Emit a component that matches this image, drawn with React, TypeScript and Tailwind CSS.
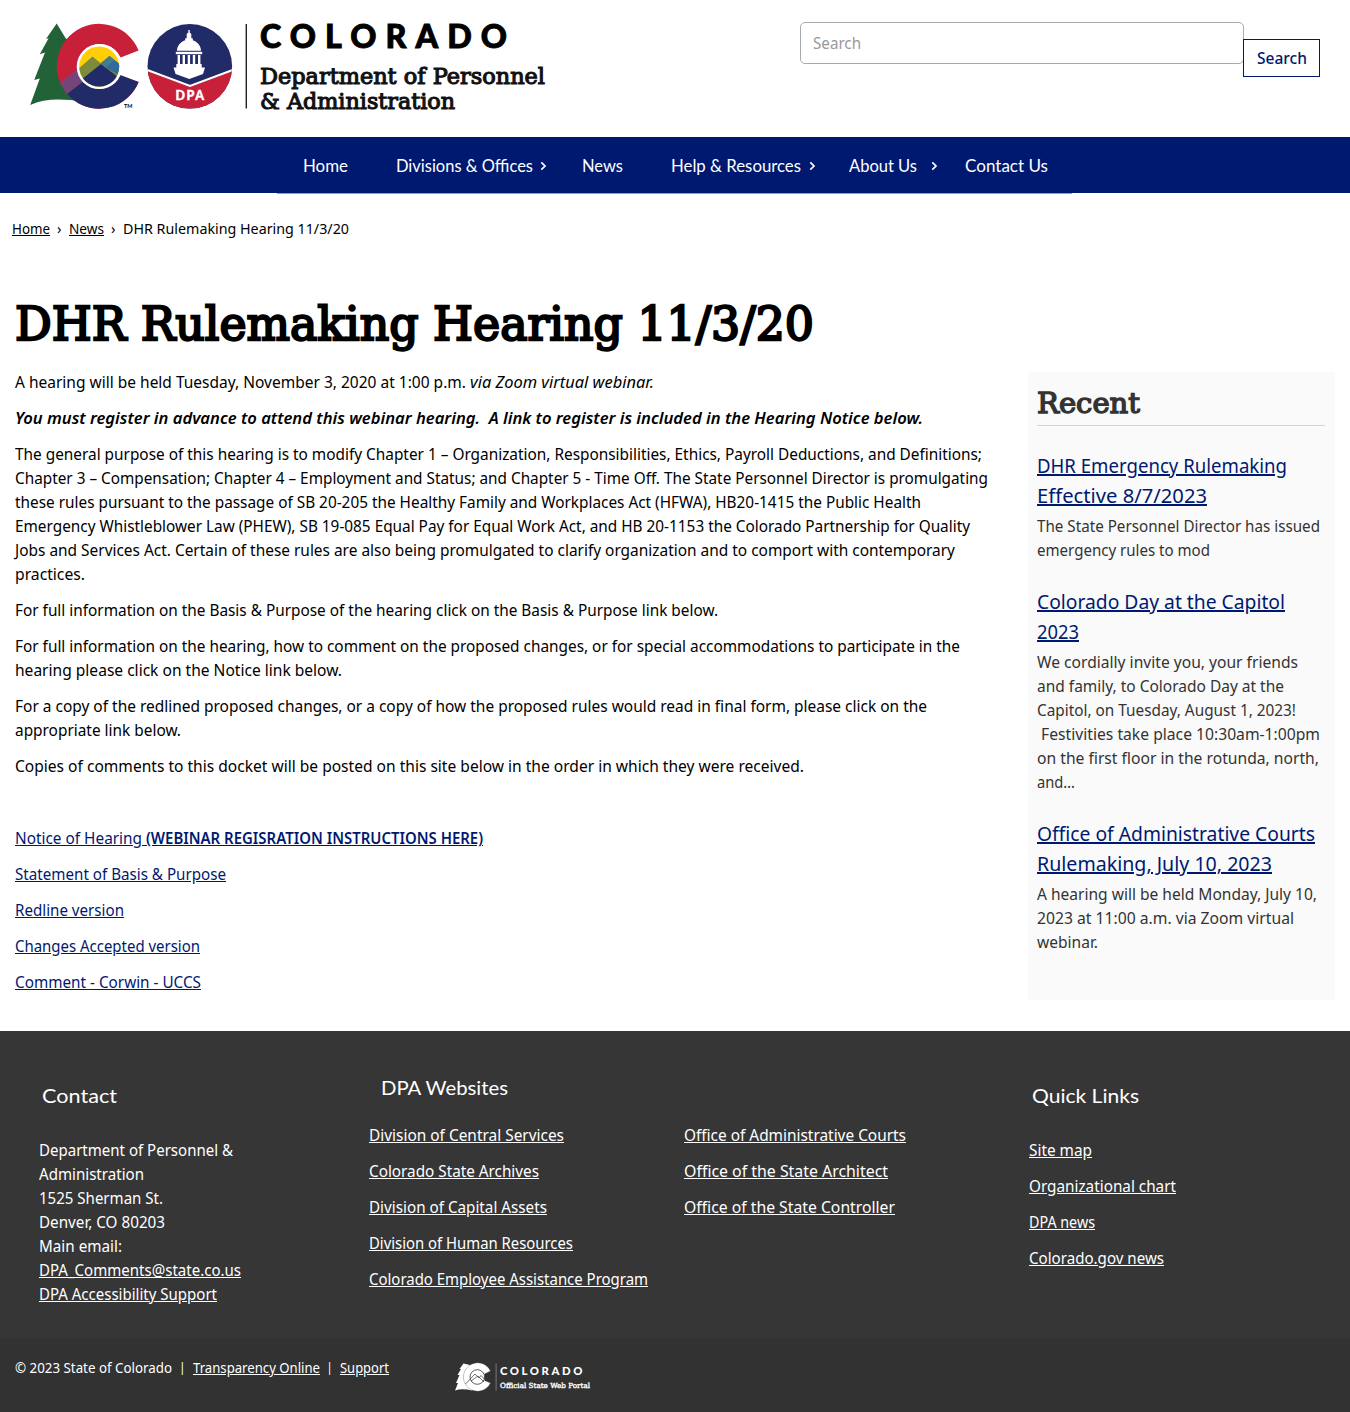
import { useLayoutEffect, useRef } from "react";
import type { ReactNode } from "react";

const BODY = "font-['Noto_Sans',sans-serif]";
const SLAB = "font-['DejaVu_Serif',serif] font-normal [-webkit-text-stroke:0.05em_currentColor]";
const MUSEO = "font-['Lato',sans-serif]";

/** One run of text, condensed or widened horizontally to a set measure. */
function Fit({ w, className = "", children }: { w: number; className?: string; children: ReactNode }) {
  const inner = useRef<HTMLSpanElement>(null);
  useLayoutEffect(() => {
    if (!inner.current) return;
    inner.current.style.transform = "none";
    const natural = inner.current.getBoundingClientRect().width;
    inner.current.style.transform = `scaleX(${w / natural})`;
    inner.current.style.marginRight = `${w - natural}px`;
  }, [w]);
  return (
    <span className="inline-block whitespace-pre">
      <span ref={inner} className={"inline-block w-max origin-left whitespace-pre " + className}>
        {children}
      </span>
    </span>
  );
}

function Para({ lines }: { lines: [number, string][] }) {
  return (
    <p className="mb-3">
      {lines.map(([w, t]) => (
        <span key={t} className="block h-6">
          <Fit w={w}>{t}</Fit>
        </span>
      ))}
    </p>
  );
}

function LinkLine({ w, children }: { w: number; children: ReactNode }) {
  return (
    <a href="#" className="block h-6">
      <Fit w={w} className="underline">{children}</Fit>
    </a>
  );
}

function Emblems() {
  return (
    <svg className="h-[88px] w-[218px] shrink-0" viewBox="30 23 218 88" aria-hidden="true">
      <defs>
        <clipPath id="cshape">
          <path d="M138.6 50.6 A42.4 42.4 0 1 0 138.6 81.9 L120.6 75.2 A22.4 22.4 0 1 1 120.6 57.6 Z" />
        </clipPath>
        <clipPath id="disc"><circle cx="99.2" cy="66.6" r="20" /></clipPath>
        <clipPath id="seal"><circle cx="189.8" cy="66.3" r="42.3" /></clipPath>
      </defs>
      <path fill="#226237" d="M56.7 23.5 L46 39 L48.6 38.2 L39.8 54.2 L45 52.6 L34.2 80 L39.8 78.6 L30.2 105 C44 99 60 98 84 102 L76 60 L70 42 L65.5 38 Z" />
      <g clipPath="url(#cshape)">
        <rect x="56" y="22" width="88" height="90" fill="#c92039" />
        <path d="M56 86 L92 58 V85 L67 95 Z" fill="#75457a" />
        <path d="M66 95 L90 76 L110 86 L120 74 L142 80 V112 H66 Z" fill="#202b68" />
      </g>
      <circle cx="99.2" cy="66.6" r="22.5" fill="#fff" />
      <g clipPath="url(#disc)">
        <rect x="78" y="45" width="43" height="43" fill="#ffce07" />
        <path d="M76 71 L92.5 56.5 L100.5 63 L109.5 56 L123 67 V90 H76 Z" fill="#7e8b3a" />
        <path d="M101 64 L109.5 56 L123 67 V78 Z" fill="#33699b" />
        <path d="M76 84 L101 64 L122 80 V90 H76 Z" fill="#202b68" />
        <path d="M101 64 L106 68 L114 60 L109.5 56 Z" fill="#3f7d93" />
      </g>
      <text x="124" y="107.5" fontSize="5.5" fontWeight="700" fontFamily="Lato, sans-serif">TM</text>
      <g clipPath="url(#seal)">
        <rect x="147" y="23" width="86" height="87" fill="#202b68" />
        <path d="M147 70 L190 86.5 L233 70 V110 H147 Z" fill="#c92039" />
        <path d="M146 69.5 L190 86 L234 69.5" fill="none" stroke="#fff" strokeWidth="2" />
      </g>
      <g fill="#fff">
        <path d="M188.3 30 h1.4 v2.5 l1.6 1.5 v4.3 h1.5 v2 C198 42 201 46.5 201 50.8 H177 C177 46.5 180 42 185.2 40.3 v-2 h1.5 v-4.3 l1.6 -1.5 Z" />
        <rect x="175.8" y="51.8" width="26.4" height="2.4" />
        <path d="M177.6 55 h2.4 v9 h-2.4z M182.6 55 h2.4 v9 h-2.4z M187.7 55 h2.4 v9 h-2.4z M192.8 55 h2.4 v9 h-2.4z M198 55 h2.4 v9 h-2.4z" />
        <path d="M176.3 64 H201.7 V67.5 H205 L203 74 L189.3 79 L175.6 74 L173.5 67.5 H176.3 Z" />
      </g>
      <text x="175.5" y="100" fontSize="12.5" fontWeight="900" fill="#fff" stroke="#fff" strokeWidth=".4" textLength="28.5" fontFamily="Lato, sans-serif">DPA</text>
      <rect x="245.6" y="24" width="1.4" height="84.5" fill="#222" />
    </svg>
  );
}

function Chevron({ className }: { className: string }) {
  return (
    <svg className={"h-[10px] w-[7px] shrink-0 " + className} viewBox="0 0 7 10" fill="none" stroke="#fff" strokeWidth="1.7">
      <path d="M1.3 1.3 L5 5 L1.3 8.7" />
    </svg>
  );
}

function PortalMark() {
  return (
    <svg className="h-[30px] w-[43px] shrink-0" viewBox="454 1362 43 30" aria-hidden="true">
      <path fill="#fff" d="M463.5 1363.5 L459.5 1369 L461 1369 L457.5 1375 L459.5 1375 L456 1383 L458 1383 L455 1390.5 Q462 1388 472 1390.5 L470 1365 Z" />
      <path fill="#fff" stroke="#333" strokeWidth=".3" d="M490.5 1371 A14.2 14.2 0 1 0 490.5 1383 L484.5 1380.5 V1374 Z" />
      <circle cx="477.3" cy="1377" r="7.3" fill="#fff" stroke="#333" strokeWidth=".8" />
      <path d="M465.5 1384 L475 1374 L479 1378 L481 1375.5 L484.5 1379 M471 1381 L478 1376 L484 1382" fill="none" stroke="#333" strokeWidth=".7" />
      <rect x="495.6" y="1363.5" width="1" height="27" fill="#777" />
    </svg>
  );
}

export default function App() {
  return (
    <div className={"h-[1412px] w-[1350px] overflow-hidden bg-white text-[16px] leading-6 text-black " + BODY}>
      <header className="flex h-[137px] justify-between pl-[30px] pr-[30px]">
        <div className="flex pt-[23px]">
          <Emblems />
          <div className="ml-3">
            <div className="-mt-[7px] h-[48px] leading-[40px]">
              <Fit w={256} className={"text-[32px] font-black tracking-[9px] [-webkit-text-stroke:0.9px_currentColor] " + MUSEO}>COLORADO</Fit>
            </div>
            <div className={"h-[25px] text-[22px] leading-[25px] text-[#111] " + SLAB}>
              <Fit w={285}>Department of Personnel</Fit>
            </div>
            <div className={"h-[25px] text-[22px] leading-[25px] text-[#111] " + SLAB}>
              <Fit w={195}>&amp; Administration</Fit>
            </div>
          </div>
        </div>
        <form className="flex pt-[22px]">
          <div className="flex h-[42px] w-[444px] items-center rounded-[5px] border border-[#aaa] pl-3 text-[#999]">
            <Fit w={48}>Search</Fit>
          </div>
          <button type="button" className="-ml-px mt-[17px] flex h-[38px] w-[77px] items-center justify-center border border-[#001970] text-[#001970]">
            <Fit w={50} className="font-medium">Search</Fit>
          </button>
        </form>
      </header>

      <nav className={"flex h-14 items-center bg-[#001970] pl-[303px] pt-px text-[17px] text-white " + MUSEO}>
        <Fit w={45}>Home</Fit>
        <span className="ml-12 flex items-center"><Fit w={137}>Divisions &amp; Offices</Fit><Chevron className="ml-[7px]" /></span>
        <span className="ml-[35px] flex"><Fit w={41}>News</Fit></span>
        <span className="ml-12 flex items-center"><Fit w={130}>Help &amp; Resources</Fit><Chevron className="ml-2" /></span>
        <span className="ml-[33px] flex items-center"><Fit w={68}>About Us</Fit><Chevron className="ml-[14px]" /></span>
        <span className="ml-[27px] flex"><Fit w={83}>Contact Us</Fit></span>
      </nav>
      <div className="ml-[277px] h-px w-[795px] bg-[#8f9bc6]" />

      <div className="flex h-[70px] items-start pl-3 pt-[22px] text-[14.5px]">
        <a href="#"><Fit w={38} className="underline">Home</Fit></a>
        <span className="ml-[7px] w-3">›</span>
        <a href="#"><Fit w={35} className="underline">News</Fit></a>
        <span className="ml-[7px] w-3">›</span>
        <Fit w={226}>DHR Rulemaking Hearing 11/3/20</Fit>
      </div>

      <main className="h-[767px] pl-[15px]">
        <h1 className={"h-[106px] pt-[30px] text-[46px] leading-[60px] " + SLAB}>
          <Fit w={799}>DHR Rulemaking Hearing 11/3/20</Fit>
        </h1>
        <div className="flex">
          <article className="w-[1013px]">
            <p className="mb-3 h-6">
              <Fit w={455}>{"A hearing will be held Tuesday, November 3, 2020 at 1:00 p.m. "}</Fit>
              <Fit w={184} className="italic">via Zoom virtual webinar.</Fit>
            </p>
            <p className="mb-3 h-6">
              <Fit w={908} className="font-semibold italic">{"You must register in advance to attend this webinar hearing.  A link to register is included in the Hearing Notice below."}</Fit>
            </p>
            <Para lines={[
              [967, "The general purpose of this hearing is to modify Chapter 1 – Organization, Responsibilities, Ethics, Payroll Deductions, and Definitions;"],
              [973, "Chapter 3 – Compensation; Chapter 4 – Employment and Status; and Chapter 5 - Time Off. The State Personnel Director is promulgating"],
              [906, "these rules pursuant to the passage of SB 20-205 the Healthy Family and Workplaces Act (HFWA), HB20-1415 the Public Health"],
              [955, "Emergency Whistleblower Law (PHEW), SB 19-085 Equal Pay for Equal Work Act, and HB 20-1153 the Colorado Partnership for Quality"],
              [940, "Jobs and Services Act. Certain of these rules are also being promulgated to clarify organization and to comport with contemporary"],
              [70, "practices."],
            ]} />
            <Para lines={[[703, "For full information on the Basis & Purpose of the hearing click on the Basis & Purpose link below."]]} />
            <Para lines={[
              [945, "For full information on the hearing, how to comment on the proposed changes, or for special accommodations to participate in the"],
              [327, "hearing please click on the Notice link below."],
            ]} />
            <Para lines={[
              [912, "For a copy of the redlined proposed changes, or a copy of how the proposed rules would read in final form, please click on the"],
              [166, "appropriate link below."],
            ]} />
            <Para lines={[[789, "Copies of comments to this docket will be posted on this site below in the order in which they were received."]]} />
            <div className="mt-12 space-y-3 text-[#001970]">
              <a href="#" className="block h-6">
                <Fit w={131} className="underline">{"Notice of Hearing "}</Fit>
                <Fit w={337} className="font-semibold underline">(WEBINAR REGISRATION INSTRUCTIONS HERE)</Fit>
              </a>
              <LinkLine w={211}>Statement of Basis &amp; Purpose</LinkLine>
              <LinkLine w={109}>Redline version</LinkLine>
              <LinkLine w={185}>Changes Accepted version</LinkLine>
              <LinkLine w={186}>Comment - Corwin - UCCS</LinkLine>
            </div>
          </article>

          <aside className="mt-[2px] h-[628px] w-[307px] bg-[#fafafa] pl-[9px] pr-[10px] text-[#333]">
            <h2 className={"h-[54px] border-b border-[#d4d4d4] pt-[12px] text-[28px] leading-10 " + SLAB}>
              <Fit w={103}>Recent</Fit>
            </h2>
            <div className="mt-[25px] text-[20px] leading-[30px] text-[#001970]">
              <a href="#" className="block h-[30px]"><Fit w={250} className="underline">DHR Emergency Rulemaking</Fit></a>
              <a href="#" className="block h-[30px]"><Fit w={170} className="underline">Effective 8/7/2023</Fit></a>
            </div>
            <div className="mt-[3px]">
              <Para lines={[[283, "The State Personnel Director has issued"], [173, "emergency rules to mod"]]} />
            </div>
            <div className="mt-[25px] text-[20px] leading-[30px] text-[#001970]">
              <a href="#" className="block h-[30px]"><Fit w={248} className="underline">Colorado Day at the Capitol</Fit></a>
              <a href="#" className="block h-[30px]"><Fit w={42} className="underline">2023</Fit></a>
            </div>
            <div className="mt-[3px]">
              <Para lines={[
                [261, "We cordially invite you, your friends"],
                [247, "and family, to Colorado Day at the"],
                [259, "Capitol, on Tuesday, August 1, 2023!"],
                [283, " Festivities take place 10:30am-1:00pm"],
                [282, "on the first floor in the rotunda, north,"],
                [38, "and…"],
              ]} />
            </div>
            <div className="mt-[25px] text-[20px] leading-[30px] text-[#001970]">
              <a href="#" className="block h-[30px]"><Fit w={278} className="underline">Office of Administrative Courts</Fit></a>
              <a href="#" className="block h-[30px]"><Fit w={235} className="underline">Rulemaking, July 10, 2023</Fit></a>
            </div>
            <div className="mt-[3px]">
              <Para lines={[[280, "A hearing will be held Monday, July 10,"], [257, "2023 at 11:00 a.m. via Zoom virtual"], [61, "webinar."]]} />
            </div>
          </aside>
        </div>
      </main>

      <footer className="text-white">
        <div className="flex h-[307px] bg-[#363636]">
          <section className="w-[369px] pl-[39px] pt-[52px]">
            <h3 className={"h-[55px] pl-[3px] text-[20px] " + MUSEO}><Fit w={75}>Contact</Fit></h3>
            <div className="h-6"><Fit w={194}>Department of Personnel &amp;</Fit></div>
            <div className="h-6"><Fit w={105}>Administration</Fit></div>
            <div className="h-6"><Fit w={124}>1525 Sherman St.</Fit></div>
            <div className="h-6"><Fit w={126}>Denver, CO 80203</Fit></div>
            <div className="h-6"><Fit w={83}>Main email:</Fit></div>
            <LinkLine w={202}>DPA_Comments@state.co.us</LinkLine>
            <LinkLine w={178}>DPA Accessibility Support</LinkLine>
          </section>
          <section className="w-[660px] pt-[44px]">
            <h3 className={"h-[48px] pl-3 text-[20px] " + MUSEO}><Fit w={127}>DPA Websites</Fit></h3>
            <div className="flex">
              <div className="w-[315px] space-y-3">
                <LinkLine w={195}>Division of Central Services</LinkLine>
                <LinkLine w={170}>Colorado State Archives</LinkLine>
                <LinkLine w={178}>Division of Capital Assets</LinkLine>
                <LinkLine w={204}>Division of Human Resources</LinkLine>
                <LinkLine w={279}>Colorado Employee Assistance Program</LinkLine>
              </div>
              <div className="space-y-3">
                <LinkLine w={222}>Office of Administrative Courts</LinkLine>
                <LinkLine w={204}>Office of the State Architect</LinkLine>
                <LinkLine w={211}>Office of the State Controller</LinkLine>
              </div>
            </div>
          </section>
          <section className="pt-[52px]">
            <h3 className={"h-[55px] pl-[3px] text-[20px] " + MUSEO}><Fit w={107}>Quick Links</Fit></h3>
            <div className="space-y-3">
              <LinkLine w={63}>Site map</LinkLine>
              <LinkLine w={147}>Organizational chart</LinkLine>
              <LinkLine w={66}>DPA news</LinkLine>
              <LinkLine w={135}>Colorado.gov news</LinkLine>
            </div>
          </section>
        </div>
        <div className="flex h-[74px] bg-[#323232] pl-[15px] text-[14px]">
          <div className="flex w-[439px] pt-[18px]">
            <Fit w={157}>© 2023 State of Colorado</Fit>
            <span className="w-[20.5px] text-center text-[12px]">|</span>
            <a href="#"><Fit w={127} className="underline">Transparency Online</Fit></a>
            <span className="w-5 text-center text-[12px]">|</span>
            <a href="#"><Fit w={49} className="underline">Support</Fit></a>
          </div>
          <div className="flex pt-6">
            <PortalMark />
            <div className="ml-[3px] pt-px">
              <div className="h-[14px] leading-[14px]">
                <Fit w={85} className={"text-[11px] font-black tracking-[2.5px] " + MUSEO}>COLORADO</Fit>
              </div>
              <div className="h-3 leading-3"><Fit w={90} className={"text-[7px] " + SLAB}>Official State Web Portal</Fit></div>
            </div>
          </div>
        </div>
      </footer>
    </div>
  );
}
